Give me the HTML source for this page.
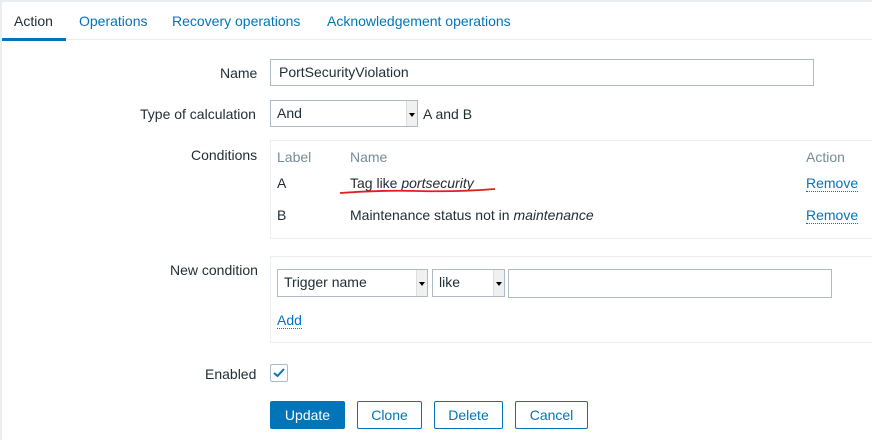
<!DOCTYPE html>
<html><head><style>
body{margin:0;width:872px;height:440px;background:#ebeef0;font-family:"Liberation Sans",Arial,sans-serif;font-size:14px;color:#1f2c33;position:relative;overflow:hidden}
.p{position:absolute;left:2px;top:2px;right:0;bottom:0;background:#fff}
.a{position:absolute;white-space:nowrap}
.l{color:#0275b8}
.in{position:absolute;border:1px solid #acbbc6;background:#fff;box-sizing:border-box;padding-left:8px;line-height:24px}
.sel{position:absolute;border:1px solid #acbbc6;background:#fff;box-sizing:border-box;padding-left:6px;line-height:24px}
.sel:after{content:"";position:absolute;right:0;top:0;width:10px;height:100%;background:#f0f0f0;border-left:1px solid #ddd}
.sel i{position:absolute;right:2px;top:12px;border:3px solid transparent;border-top:4px solid #000;z-index:1}
.u{border-bottom:1px dotted #0275b8}
.btn{position:absolute;top:401px;height:28px;box-sizing:border-box;border:1px solid #0275b8;color:#0275b8;border-radius:2px;text-align:center;line-height:26px;background:#fff}
.box{position:absolute;border:1px solid #ebeef0;box-sizing:border-box}
.g{color:#768d99}
</style></head><body>
<div class="p"></div>
<div class="a" style="left:2px;top:39px;width:870px;height:1px;background:#ebeef0"></div>
<div class="a" style="left:2px;top:38px;width:64px;height:3px;background:#0275b8"></div>
<div class="a" style="left:14px;top:13px">Action</div>
<div class="a l" style="left:79px;top:13px">Operations</div>
<div class="a l" style="left:172px;top:13px">Recovery operations</div>
<div class="a l" style="left:327px;top:13px">Acknowledgement operations</div>

<div class="a" style="left:220px;top:65px">Name</div>
<div class="in" style="left:270px;top:59px;width:544px;height:27px">PortSecurityViolation</div>
<div class="a" style="left:140px;top:106px">Type of calculation</div>
<div class="sel" style="left:270px;top:100px;width:148px;height:27px">And<i></i></div>
<div class="a" style="left:423px;top:106px">A and B</div>

<div class="a" style="left:191px;top:147px">Conditions</div>
<div class="box" style="left:270px;top:140px;width:610px;height:99px"></div>
<div class="a g" style="left:277px;top:149px">Label</div>
<div class="a g" style="left:350px;top:149px">Name</div>
<div class="a g" style="left:806px;top:149px">Action</div>
<div class="a" style="left:277px;top:175px">A</div>
<div class="a" style="left:350px;top:175px">Tag like <i>portsecurity</i></div>
<svg class="a" style="left:338px;top:186px" width="160" height="10"><path d="M2 7 Q40 4 80 5 T157 3" stroke="#e02020" stroke-width="1.8" fill="none"/></svg>
<div class="a l u" style="left:806px;top:175px">Remove</div>
<div class="a" style="left:277px;top:207px">B</div>
<div class="a" style="left:350px;top:207px">Maintenance status not in <i>maintenance</i></div>
<div class="a l u" style="left:806px;top:207px">Remove</div>

<div class="a" style="left:170px;top:262px">New condition</div>
<div class="box" style="left:270px;top:256px;width:610px;height:87px"></div>
<div class="sel" style="left:277px;top:269px;width:151px;height:28px">Trigger name<i></i></div>
<div class="sel" style="left:432px;top:269px;width:73px;height:28px">like<i></i></div>
<div class="in" style="left:508px;top:269px;width:324px;height:29px"></div>
<div class="a l u" style="left:277px;top:312px">Add</div>

<div class="a" style="left:205px;top:366px">Enabled</div>
<div class="a" style="left:270px;top:364px;width:18px;height:18px;border:1px solid #acbbc6;box-sizing:border-box;border-radius:2px"><svg width="16" height="16" style="position:absolute;left:0;top:0"><path d="M3 8 L6.5 11 L13 4" stroke="#0275b8" stroke-width="2" fill="none"/></svg></div>

<div class="btn" style="left:270px;width:75px;background:#0275b8;color:#fff">Update</div>
<div class="btn" style="left:357px;width:65px">Clone</div>
<div class="btn" style="left:434px;width:69px">Delete</div>
<div class="btn" style="left:515px;width:73px">Cancel</div>
</body></html>
